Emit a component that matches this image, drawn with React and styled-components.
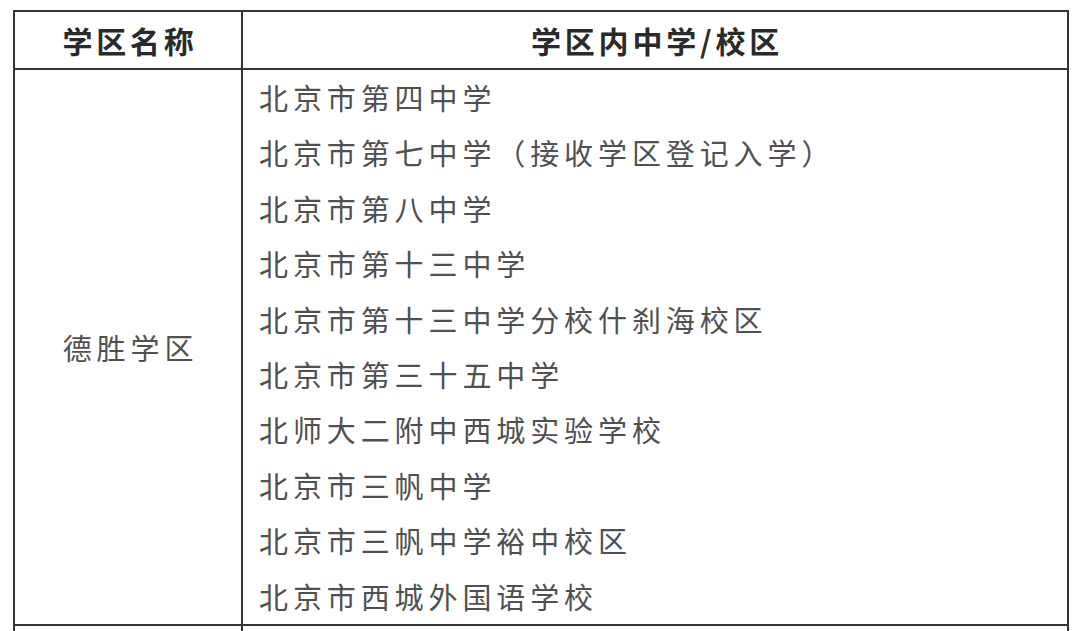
import React from 'react';
import styled, { createGlobalStyle } from 'styled-components';

const GlobalStyle = createGlobalStyle`
  html, body {
    margin: 0;
    padding: 0;
    background: #ffffff;
    overflow: hidden;
  }
  body {
    font-family: "Noto Sans CJK SC", "Noto Sans", sans-serif;
  }
`;

const Page = styled.div`
  padding: 10px 0 0 13px;
  height: 631px;
  box-sizing: border-box;
  overflow: hidden;
`;

const Table = styled.div`
  width: 1056px;
  display: grid;
  grid-template-columns: 226px 1fr;
  grid-auto-rows: auto;
  gap: 2px;
  padding: 2px;
  box-sizing: border-box;
  background: #353535;
`;

const HeadCell = styled.div`
  background: #ffffff;
  height: 56px;
  display: flex;
  align-items: center;
  justify-content: center;
  font-size: 30px;
  font-weight: 700;
  letter-spacing: 3.8px;
  color: #2a2a2a;
  padding-left: 4px;
`;

const NameCell = styled.div`
  background: #ffffff;
  display: flex;
  align-items: center;
  justify-content: center;
  font-size: 29px;
  letter-spacing: 4.9px;
  color: #505050;
  padding-left: 5px;
`;

const ListCell = styled.div`
  background: #ffffff;
  padding: 0 0 0 16px;
  display: flex;
  flex-direction: column;
`;

const School = styled.div`
  height: 55.4px;
  line-height: 55.4px;
  font-size: 29px;
  letter-spacing: 4.9px;
  color: #505050;
  white-space: nowrap;
`;

const EmptyCell = styled.div`
  background: #ffffff;
  height: 60px;
`;

const schools = [
  '北京市第四中学',
  '北京市第七中学（接收学区登记入学）',
  '北京市第八中学',
  '北京市第十三中学',
  '北京市第十三中学分校什刹海校区',
  '北京市第三十五中学',
  '北师大二附中西城实验学校',
  '北京市三帆中学',
  '北京市三帆中学裕中校区',
  '北京市西城外国语学校',
];

export default function App() {
  return (
    <>
      <GlobalStyle />
      <Page>
        <Table>
          <HeadCell>学区名称</HeadCell>
          <HeadCell>学区内中学/校区</HeadCell>
          <NameCell>德胜学区</NameCell>
          <ListCell>
            {schools.map((s) => (
              <School key={s}>{s}</School>
            ))}
          </ListCell>
          <EmptyCell />
          <EmptyCell />
        </Table>
      </Page>
    </>
  );
}
